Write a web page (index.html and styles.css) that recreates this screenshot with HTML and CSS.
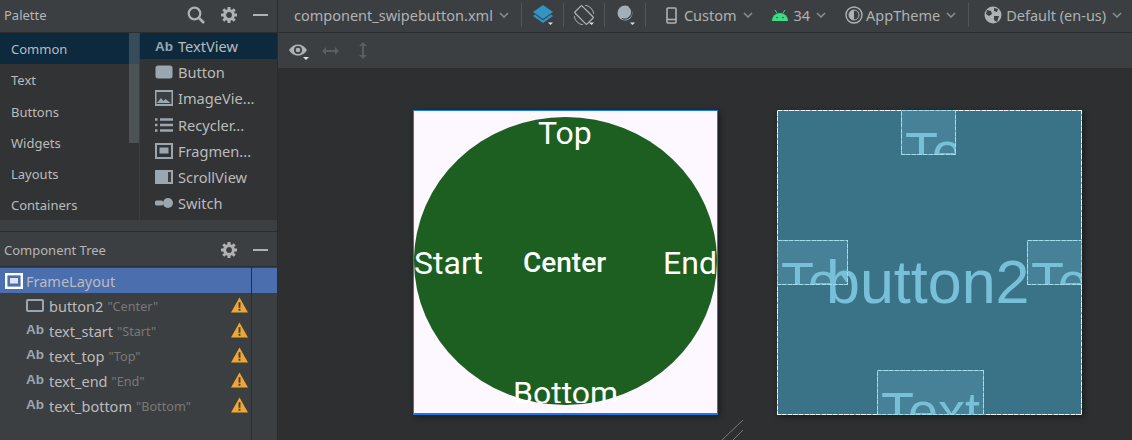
FILE: index.html
```html
<!DOCTYPE html>
<html lang="en">
    <head>
        <meta charset="UTF-8">
        <meta name="viewport" content="width=device-width, initial-scale=1.0">
        <title>component_swipebutton.xml</title>
        <link rel="stylesheet" href="styles.css">
    </head>
    <body>
        <div class="app">
            <aside class="side">
                <div class="panel-head palette-head">
                    <span class="panel-title">Palette</span>
                    <svg class="head-icon search-icon" viewBox="0 0 18 18"><circle cx="7.5" cy="7.5" r="5.8" fill="none" stroke="#afb1b3" stroke-width="2.2"/><path d="M12 12l5 5" stroke="#afb1b3" stroke-width="2.6"/></svg>
                    <svg class="head-icon gear-icon" viewBox="0 0 16 16"><circle cx="8" cy="8" r="4.4" fill="none" stroke="#afb1b3" stroke-width="3"/><path d="M8 0v3M8 13v3M0 8h3M13 8h3M2.3 2.3l2.2 2.2M11.5 11.5l2.2 2.2M13.7 2.3l-2.2 2.2M4.5 11.5l-2.2 2.2" stroke="#afb1b3" stroke-width="3"/></svg>
                    <span class="dash"></span>
                </div>
                <div class="palette">
                    <ul class="categories">
                        <li class="category selected">Common</li>
                        <li class="category">Text</li>
                        <li class="category">Buttons</li>
                        <li class="category">Widgets</li>
                        <li class="category">Layouts</li>
                        <li class="category">Containers</li>
                        <li class="cat-scroll"></li>
                    </ul>
                    <ul class="widgets">
                        <li class="widget selected"><span class="ab">Ab</span>TextView</li>
                        <li class="widget"><svg class="w-icon" viewBox="0 0 18 14"><rect x="0.5" y="0.5" width="17" height="13" rx="2.5" fill="#9aa7b0"/></svg>Button</li>
                        <li class="widget"><svg class="w-icon" viewBox="0 0 18 16"><rect width="18" height="16" fill="#9aa7b0"/><rect x="1.5" y="2" width="15" height="12" fill="#3c3f41"/><path d="M2 13l4-5 2.5 3 2-2 5 4z" fill="#9aa7b0"/></svg>ImageVie...</li>
                        <li class="widget"><svg class="w-icon" viewBox="0 0 18 14"><path d="M0 1.5h2.5M5 1.5h13M0 7h2.5M5 7h13M0 12.5h2.5M5 12.5h13" stroke="#9aa7b0" stroke-width="2.4"/></svg>Recycler...</li>
                        <li class="widget"><svg class="w-icon" viewBox="0 0 18 16"><rect x="1" y="1" width="16" height="14" fill="none" stroke="#9aa7b0" stroke-width="2"/><rect x="4.5" y="4.5" width="9" height="6" fill="#9aa7b0"/></svg>Fragmen...</li>
                        <li class="widget"><svg class="w-icon" viewBox="0 0 18 14"><rect width="18" height="14" fill="#9aa7b0"/><rect x="13" y="2" width="3" height="10" fill="#3c3f41"/></svg>ScrollView</li>
                        <li class="widget"><svg class="w-icon" viewBox="0 0 18 10"><rect x="0" y="2.5" width="8" height="5" rx="1.5" fill="#9aa7b0"/><circle cx="13" cy="5" r="5" fill="#9aa7b0"/></svg>Switch</li>
                    </ul>
                </div>
                <div class="split"></div>
                <div class="panel-head tree-head">
                    <span class="panel-title">Component Tree</span>
                    <svg class="head-icon gear-icon" viewBox="0 0 16 16"><circle cx="8" cy="8" r="4.4" fill="none" stroke="#afb1b3" stroke-width="3"/><path d="M8 0v3M8 13v3M0 8h3M13 8h3M2.3 2.3l2.2 2.2M11.5 11.5l2.2 2.2M13.7 2.3l-2.2 2.2M4.5 11.5l-2.2 2.2" stroke="#afb1b3" stroke-width="3"/></svg>
                    <span class="dash"></span>
                </div>
                <div class="tree">
                    <div class="tree-row root">
                        <svg class="t-icon root-icon" viewBox="0 0 18 16"><rect x="1.2" y="1.2" width="15.6" height="13.6" fill="none" stroke="#fff" stroke-width="2.4"/><rect x="5" y="5" width="8" height="5.5" fill="#dfe6f2"/></svg>
                        <span class="t-name">FrameLayout</span>
                    </div>
                    <div class="tree-row">
                        <svg class="t-icon" viewBox="0 0 18 14"><rect x="1" y="1" width="16" height="11" rx="1" fill="none" stroke="#9aa7b0" stroke-width="2"/></svg>
                        <span class="t-name">button2</span><span class="t-text">"Center"</span>
                        <svg class="warn" viewBox="0 0 18 16"><path d="M9 0l9 16H0z" fill="#f0a732"/><path d="M8 5h2v6H8zM8 12h2v2H8z" fill="#3c3f41"/></svg>
                    </div>
                    <div class="tree-row">
                        <span class="ab t-ab">Ab</span>
                        <span class="t-name">text_start</span><span class="t-text">"Start"</span>
                        <svg class="warn" viewBox="0 0 18 16"><path d="M9 0l9 16H0z" fill="#f0a732"/><path d="M8 5h2v6H8zM8 12h2v2H8z" fill="#3c3f41"/></svg>
                    </div>
                    <div class="tree-row">
                        <span class="ab t-ab">Ab</span>
                        <span class="t-name">text_top</span><span class="t-text">"Top"</span>
                        <svg class="warn" viewBox="0 0 18 16"><path d="M9 0l9 16H0z" fill="#f0a732"/><path d="M8 5h2v6H8zM8 12h2v2H8z" fill="#3c3f41"/></svg>
                    </div>
                    <div class="tree-row">
                        <span class="ab t-ab">Ab</span>
                        <span class="t-name">text_end</span><span class="t-text">"End"</span>
                        <svg class="warn" viewBox="0 0 18 16"><path d="M9 0l9 16H0z" fill="#f0a732"/><path d="M8 5h2v6H8zM8 12h2v2H8z" fill="#3c3f41"/></svg>
                    </div>
                    <div class="tree-row">
                        <span class="ab t-ab">Ab</span>
                        <span class="t-name">text_bottom</span><span class="t-text">"Bottom"</span>
                        <svg class="warn" viewBox="0 0 18 16"><path d="M9 0l9 16H0z" fill="#f0a732"/><path d="M8 5h2v6H8zM8 12h2v2H8z" fill="#3c3f41"/></svg>
                    </div>
                </div>
            </aside>
            <main class="main">
                <div class="toolbar">
                    <span class="tb-text file-name">component_swipebutton.xml</span>
                    <svg class="chev" viewBox="0 0 10 6"><path d="M1 1l4 4 4-4" fill="none" stroke="#8c8f91" stroke-width="1.5"/></svg>
                    <span class="sep sep-a"></span>
                    <svg class="tb-icon layers" viewBox="0 0 20 20"><path d="M10 0l10 7-10 7L0 7z" fill="#3592c4"/><path d="M0 11l2-1.4 8 5.6 8-5.6 2 1.4-10 7z" fill="#3592c4"/><path d="M15 17.5h5L17.500 20z" fill="#dfe1e2"/></svg>
                    <span class="sep"></span>
                    <svg class="tb-icon" viewBox="0 0 20 20"><rect x="5" y="1.500" width="10" height="17" rx="1" transform="rotate(-45 10 10)" fill="none" stroke="#afb1b3" stroke-width="1.3"/><path d="M11 0.200a10 10 0 0 1 8.800 8.800M9 19.800a10 10 0 0 1-8.800-8.800" fill="none" stroke="#afb1b3"/><path d="M15 17.500h5L17.500 20z" fill="#dfe1e2"/></svg>
                    <span class="sep"></span>
                    <svg class="tb-icon night" viewBox="0 0 20 20"><circle cx="8" cy="8" r="7.500" fill="#a3afb8"/><path d="M12 1.500a7 7 0 0 1-7 12" fill="none" stroke="#3c3f41" stroke-width="1.200"/><path d="M13 17.500h5L15.500 20z" fill="#dfe1e2"/></svg>
                    <span class="sep"></span>
                    <svg class="phone" viewBox="0 0 11 17"><rect x="1" y="1" width="9" height="15" rx="1" fill="none" stroke="#afb1b3" stroke-width="1.6"/><path d="M1 12.500h9" stroke="#afb1b3" stroke-width="1.6"/></svg>
                    <span class="tb-text custom">Custom</span>
                    <svg class="chev" viewBox="0 0 10 6"><path d="M1 1l4 4 4-4" fill="none" stroke="#8c8f91" stroke-width="1.5"/></svg>
                    <svg class="android" viewBox="0 0 16 11"><path d="M0 11a8 8 0 0 1 16 0z" fill="#3ddc84"/><path d="M3 0l2 3M13 0l-2 3" stroke="#3ddc84" stroke-width="1"/><circle cx="5" cy="7.500" r="0.800" fill="#3c3f41"/><circle cx="11" cy="7.500" r="0.800" fill="#3c3f41"/></svg>
                    <span class="tb-text api">34</span>
                    <svg class="chev" viewBox="0 0 10 6"><path d="M1 1l4 4 4-4" fill="none" stroke="#8c8f91" stroke-width="1.5"/></svg>
                    <svg class="theme" viewBox="0 0 18 18"><circle cx="9" cy="9" r="8" fill="none" stroke="#afb1b3" stroke-width="1.4"/><path d="M9 4a5 5 0 0 0 0 10z" fill="#afb1b3"/><circle cx="9" cy="9" r="5" fill="none" stroke="#afb1b3"/></svg>
                    <span class="tb-text theme-name">AppTheme</span>
                    <svg class="chev" viewBox="0 0 10 6"><path d="M1 1l4 4 4-4" fill="none" stroke="#8c8f91" stroke-width="1.5"/></svg>
                    <span class="sep sep-b"></span>
                    <svg class="globe" viewBox="0 0 18 18"><circle cx="9" cy="9" r="8.500" fill="#afb1b3"/><path d="M3 4l4 1 1 3-3 2-3-2zM10 2l4 1-1 3-3-1zM10 10l5 0-2 6-3-2z" fill="#3c3f41"/></svg>
                    <span class="tb-text locale">Default (en-us)</span>
                    <svg class="chev" viewBox="0 0 10 6"><path d="M1 1l4 4 4-4" fill="none" stroke="#8c8f91" stroke-width="1.5"/></svg>
                </div>
                <div class="toolbar-two">
                    <svg class="eye" viewBox="0 0 20 18"><path d="M0 6c4-7.500 14-7.500 18 0-4 7.500-14 7.500-18 0z" fill="#afb1b3"/><circle cx="9" cy="6" r="4" fill="#3c3f41"/><circle cx="9" cy="6" r="2.300" fill="#afb1b3"/><path d="M14 13h6l-3 3z" fill="#dfe1e2"/></svg>
                    <svg class="fit-h" viewBox="0 0 17 10"><path d="M0 5l4-4v3h9V1l4 4-4 4V6H4v3z" fill="#5b5e60"/></svg>
                    <svg class="fit-v" viewBox="0 0 10 17"><path d="M5 0l4 4H6v9h3l-4 4-4-4h3V4H1z" fill="#5b5e60"/></svg>
                </div>
                <div class="canvas">
                    <div class="device">
                        <div class="round-btn"></div>
                        <span class="d-text d-top">Top</span>
                        <span class="d-text d-start">Start</span>
                        <span class="d-text d-center">Center</span>
                        <span class="d-text d-end">End</span>
                        <span class="d-text d-bottom">Bottom</span>
                    </div>
                    <div class="blueprint">
                        <span class="bp-label">button2</span>
                        <div class="bp-box bp-top"><span>Text</span></div>
                        <div class="bp-box bp-start"><span>Text</span></div>
                        <div class="bp-box bp-end"><span>Text</span></div>
                        <div class="bp-box bp-bottom"><span>Text</span></div>
                    </div>
                    <svg class="resize" viewBox="0 0 22 20"><path d="M0 20L21 0M11 20l10-10" stroke="#77797b" stroke-width="1"/></svg>
                </div>
            </main>
        </div>
    </body>
</html>
```
FILE: styles.css
```css
* {
    box-sizing: border-box;
}
html, body {
    margin: 0;
    height: 100%;
    overflow: hidden;
}
body {
    font-family: "Noto Sans", "Open Sans", sans-serif;
    font-size: 13px;
    color: #bbbbbb;
    background-color: #3c3f41;
}
ul {
    list-style: none;
    margin: 0;
    padding: 0;
}
svg {
    display: block;
    flex: none;
}
.app {
    display: flex;
    width: 1132px;
    height: 440px;
}

/* left column */
.side {
    width: 278px;
    flex: none;
    display: flex;
    flex-direction: column;
    background-color: #3c3f41;
    border-right: 1px solid #2b2b2b;
}
.panel-head {
    display: flex;
    align-items: center;
    flex: none;
}
.palette-head {
    height: 33px;
    padding: 0 0 3px 4px;
    border-bottom: 1px solid #2b2d2e;
}
.tree-head {
    height: 35px;
    padding: 2px 0 0 4px;
    border-bottom: 1px solid #2b2d2e;
}
.panel-title {
    flex: 1;
    font-size: 13px;
    color: #b4b6b8;
}
.head-icon {
    width: 16px;
    height: 16px;
}
.search-icon {
    width: 18px;
    height: 18px;
    margin-right: 16px;
}
.dash {
    width: 15px;
    height: 2px;
    margin: 0 9px 0 16px;
    background-color: #afb1b3;
}
.palette {
    display: flex;
    height: 187px;
    flex: none;
    background-color: #313335;
}
.categories {
    position: relative;
    width: 140px;
    flex: none;
    border-right: 1px solid #3c3f41;
}
.category {
    height: 31.25px;
    padding-left: 11px;
    line-height: 32px;
    color: #bbbbbb;
}
.category.selected {
    background-color: #0d293e;
}
.cat-scroll {
    position: absolute;
    top: 0;
    right: 0;
    width: 10px;
    height: 110px;
    background-color: rgba(120, 130, 135, 0.4);
}
.widgets {
    flex: 1;
}
.widget {
    display: flex;
    align-items: center;
    height: 26.2px;
    padding-left: 15px;
    color: #bbbbbb;
    font-size: 14.6px;
}
.widget.selected {
    background-color: #0d293e;
}
.w-icon {
    width: 18px;
    margin-right: 5px;
}
.ab {
    flex: none;
    width: 18px;
    margin-right: 5px;
    font-family: "Liberation Sans", sans-serif;
    font-weight: bold;
    font-size: 13.5px;
    white-space: nowrap;
    color: #9aa7b0;
}
.split {
    flex: none;
    height: 12px;
    border-bottom: 1px solid #2b2d2e;
}
.tree {
    flex: 1;
    position: relative;
    padding-top: 1px;
    background-image: linear-gradient(#2b2d2e, #2b2d2e);
    background-repeat: no-repeat;
    background-size: 1px 100%;
    background-position: 251px 0;
}
.tree-row {
    display: flex;
    align-items: center;
    height: 25px;
    padding: 1px 0 0 26px;
    font-size: 14.5px;
    position: relative;
}
.tree-row.root {
    padding: 0 0 0 5px;
    background-color: #4b6eaf;
    background-image: linear-gradient(#2b2d2e, #2b2d2e);
    background-repeat: no-repeat;
    background-size: 1px 100%;
    background-position: 251px 0;
}
.t-icon {
    width: 18px;
    height: 14px;
    margin-right: 5px;
}
.root-icon {
    height: 16px;
    margin-right: 3px;
}
.t-ab {
    margin-right: 5px;
    margin-top: -4px;
}
.t-name {
    color: #bbbbbb;
}
.t-text {
    margin-left: 4px;
    font-size: 12.7px;
    color: #787878;
}
.warn {
    position: absolute;
    left: 231px;
    top: 4px;
    width: 17px;
    height: 16px;
}

/* main column */
.main {
    flex: 1;
    display: flex;
    flex-direction: column;
    min-width: 0;
}
.toolbar {
    display: flex;
    align-items: center;
    height: 33px;
    padding: 0 0 2px 16px;
    flex: none;
    border-bottom: 1px solid #2b2d2e;
}
.tb-text {
    font-size: 14.5px;
    color: #afb1b3;
}
.chev {
    width: 10px;
    height: 6px;
    margin-left: 6px;
}
.sep {
    width: 1px;
    height: 24px;
    margin: 0 10px;
    background-color: #515658;
}
.sep-a {
    margin-left: 12px;
    margin-right: 11px;
}
.sep-b {
    margin-left: 12px;
    margin-right: 15px;
}
.tb-icon {
    width: 20px;
    height: 20px;
}
.night {
    margin-left: 2px;
    margin-right: -2px;
}
.phone {
    width: 11px;
    height: 17px;
    margin-left: 10px;
    margin-right: 7px;
}
.android {
    width: 16px;
    height: 11px;
    margin-left: 19px;
    margin-right: 6px;
}
.theme {
    width: 18px;
    height: 18px;
    margin-left: 19px;
    margin-right: 3px;
}
.globe {
    width: 18px;
    height: 18px;
    margin-right: 4px;
}
.toolbar-two {
    display: flex;
    align-items: center;
    height: 36px;
    padding-left: 11px;
    flex: none;
    background-color: #3c3f41;
    border-bottom: 1px solid #2b2d2e;
}
.eye {
    width: 20px;
    height: 18px;
    margin-top: 4px;
}
.fit-h {
    width: 17px;
    height: 10px;
    margin-left: 13px;
}
.fit-v {
    width: 10px;
    height: 17px;
    margin-left: 19px;
}

/* design surface */
.canvas {
    flex: 1;
    position: relative;
    overflow: hidden;
    background-color: #2d2f30;
}
.device {
    position: absolute;
    left: 135px;
    top: 41px;
    width: 305px;
    height: 305px;
    overflow: hidden;
    background-color: #fdf7ff;
    border: 1px solid #1a78ea;
    border-bottom-width: 2px;
    box-shadow: 2px 2px 6px rgba(0, 0, 0, 0.4);
    font-family: Roboto, "Liberation Sans", sans-serif;
}
.round-btn {
    position: absolute;
    left: 0;
    top: 6px;
    width: 303px;
    height: 288px;
    border-radius: 50%;
    background-color: #1d5e21;
}
.d-text {
    position: absolute;
    color: #fff;
    font-size: 32px;
    line-height: 38px;
    white-space: nowrap;
}
.d-top {
    left: 124px;
    top: 3px;
}
.d-start {
    left: 0;
    top: 133px;
}
.d-center {
    left: 109px;
    top: 136px;
    font-size: 28px;
    line-height: 32px;
    font-weight: 500;
}
.d-end {
    right: 0;
    top: 133px;
}
.d-bottom {
    left: 99px;
    top: 263px;
    height: 29px;
    overflow: hidden;
}
.blueprint {
    position: absolute;
    left: 499px;
    top: 41px;
    width: 305px;
    height: 305px;
    background-color: #3a7288;
    border: 1px solid;
    border-image: repeating-linear-gradient(45deg, #f2f8fa 0 3px, #8fb0bd 3px 4px) 1;
    box-shadow: 2px 2px 6px rgba(0, 0, 0, 0.4);
    font-family: "Liberation Sans", sans-serif;
    color: #78c0d8;
}
.bp-label {
    position: absolute;
    left: 48px;
    top: 137px;
    font-size: 61px;
    line-height: 68px;
}
.bp-box {
    position: absolute;
    overflow: hidden;
    height: 45px;
    padding: 9px 0 0 3px;
    background-color: rgba(120, 190, 214, 0.2);
    border: 1px solid;
    border-image: repeating-linear-gradient(45deg, #a5dcea 0 3px, #74b4c9 3px 4px) 1;
    font-size: 54px;
    line-height: 62px;
}
.bp-top {
    left: 123px;
    top: -1px;
    width: 55px;
}
.bp-start {
    left: -1px;
    top: 129px;
    width: 71px;
}
.bp-end {
    right: -1px;
    top: 129px;
    width: 55px;
}
.bp-bottom {
    left: 99px;
    top: 259px;
    width: 107px;
}
.resize {
    position: absolute;
    left: 444px;
    top: 351px;
    width: 22px;
    height: 20px;
}
```
